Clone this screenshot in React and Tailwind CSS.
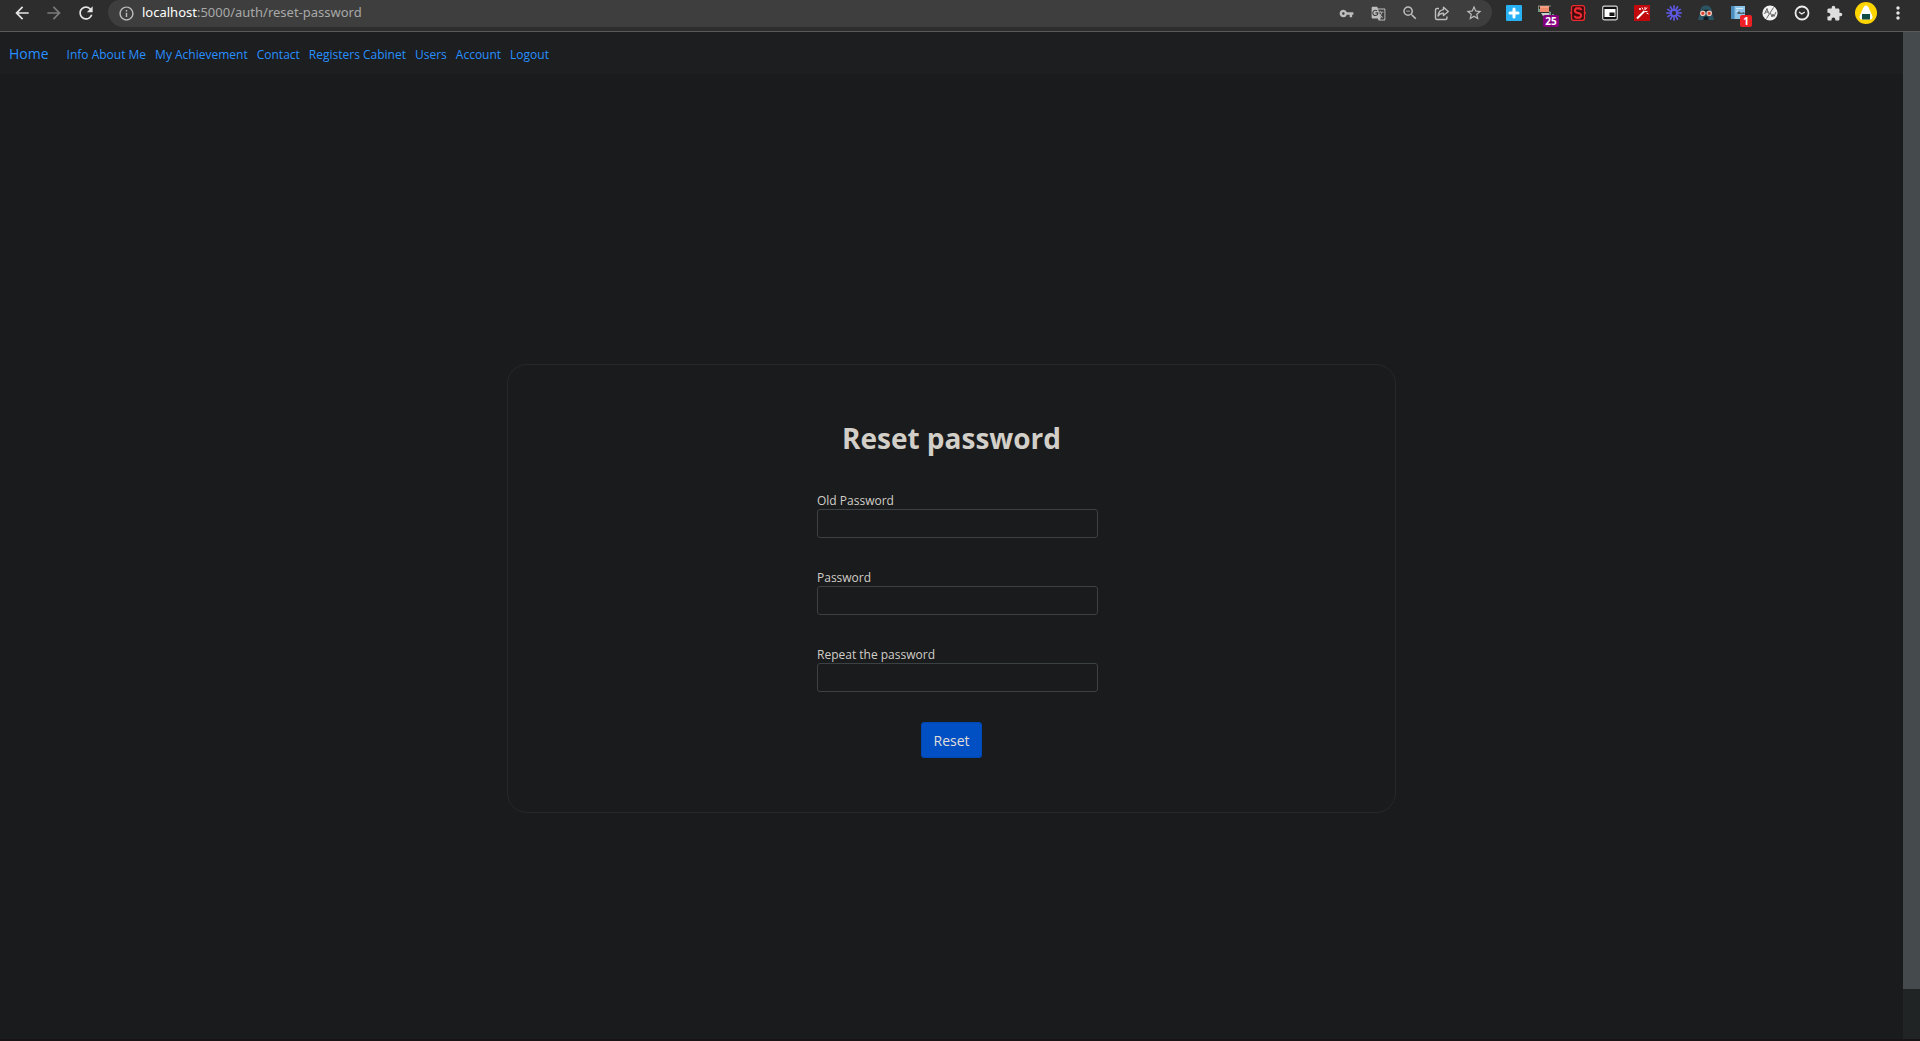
import React from "react";
import {
  MdArrowBack, MdArrowForward, MdRefresh, MdInfoOutline, MdVpnKey, MdGTranslate,
  MdZoomOut, MdStarBorder, MdExtension, MdMoreVert,
} from "react-icons/md";

const navLinks = ["Info About Me", "My Achievement", "Contact", "Registers Cabinet", "Users", "Account", "Logout"];

const fields = [
  { id: "old-password", label: "Old Password" },
  { id: "password", label: "Password" },
  { id: "repeat-password", label: "Repeat the password" },
];

function IconButton({ label, children }) {
  return (
    <button type="button" aria-label={label} className="flex h-[26px] w-8 shrink-0 items-center justify-center">
      {children}
    </button>
  );
}

function ShareIcon() {
  return (
    <svg viewBox="0 0 16 16" className="size-4" fill="none" stroke="currentColor" strokeWidth="1.4" strokeLinejoin="round">
      <path d="M5 3.5H3A1.5 1.5 0 0 0 1.5 5v8A1.500 1.500 0 0 0 3 14.500h8.500A1.500 1.500 0 0 0 13 13v-1.500" />
      <path d="M9.500 2.200 14.300 6.500 9.500 10.500V8.300C7 8.300 5.300 9 4 11c.3-3.500 2.300-6 5.500-6.400z" />
    </svg>
  );
}

function PlusIcon() {
  return (
    <svg viewBox="0 0 16 16" className="size-4">
      <rect width="16" height="16" rx="1" fill="#29b1f5" />
      <path d="M8 4v8M4 8h8" stroke="#fff" strokeWidth="3" strokeLinecap="round" />
    </svg>
  );
}

function SignIcon() {
  return (
    <svg viewBox="0 0 16 16" className="size-4">
      <path d="M.5 1v3M0 1h13" stroke="#8a8a7a" strokeWidth="1" />
      <rect x="2" y="1" width="9" height="6" fill="#f08a6c" />
      <path d="M2 2h9" stroke="#f7b39c" strokeWidth="1" />
      <path d="M0 4h2v3H0zM11 6l2 1v4h-2zM14 9h2v3h-2z" fill="#6f9b86" />
      <path d="M3 8h8v3H5z" fill="#c9cfcb" />
    </svg>
  );
}

function SIcon() {
  return (
    <svg viewBox="0 0 16 16" className="size-4">
      <rect x="1.500" y=".7" width="13" height="14.600" rx="2" fill="#3a0c0e" stroke="#ee2a2f" strokeWidth="1.300" />
      <path d="M0 8h1.500M14.500 8H16" stroke="#ee2a2f" strokeWidth="1.500" />
      <path d="M11 5.200V4.500L9.800 3.300H6.300L5 4.600v1.800l1.200 1.200 3.600.8L11 9.600v1.800l-1.300 1.300H6.200L5 11.500v-.8" fill="none" stroke="#ee2a2f" strokeWidth="2.200" />
    </svg>
  );
}

function PipIcon() {
  return (
    <svg viewBox="0 0 16 16" className="size-4">
      <rect x=".7" y="1.200" width="14.600" height="13.600" rx="1.500" fill="#111" stroke="#d6d6d6" strokeWidth="1.200" />
      <rect x="2.500" y="4" width="11" height="8" fill="#fff" />
      <rect x="7.500" y="7.500" width="5" height="3.500" fill="#111" />
    </svg>
  );
}

function WandIcon() {
  return (
    <svg viewBox="0 0 16 16" className="size-4">
      <rect width="16" height="16" fill="#c00a0d" />
      <path d="M3 13.500 10.500 6" stroke="#fff" strokeWidth="2" />
      <path d="M11 2v3M13.500 6.500H11M13 2.500 11.500 4.500M8 2.500l1 2M14.500 9l-2-1M5 4h2M6 3v2" stroke="#fff" strokeWidth="1" />
    </svg>
  );
}

function BurstIcon() {
  return (
    <svg viewBox="0 0 16 16" className="size-4" stroke="#6059e6" strokeWidth="1.600" fill="none">
      {[0, 30, 60, 90, 120, 150, 180, 210, 240, 270, 300, 330].map((a) => (
        <path key={a} d="M8 .2V5.500" transform={`rotate(${a} 8 8)`} />
      ))}
      <circle cx="8" cy="8" r="3" />
    </svg>
  );
}

function MaskIcon() {
  return (
    <svg viewBox="0 0 16 16" className="size-4">
      <path d="M2 8C2 3 4 .5 8 .5S14 3 14 8l2 7H0z" fill="#2b5464" />
      <path d="M4 5.500h8" stroke="#14242b" strokeWidth="1.500" />
      <circle cx="4.800" cy="8.300" r="2.200" fill="#d9402f" stroke="#f0c9bb" strokeWidth="1.200" />
      <circle cx="11.200" cy="8.300" r="2.200" fill="#d9402f" stroke="#f0c9bb" strokeWidth="1.200" />
      <path d="M5.500 12.500 8 11l2.500 1.500V15h-5z" fill="#101a20" />
    </svg>
  );
}

function NotebookIcon() {
  return (
    <svg viewBox="0 0 16 16" className="size-4">
      <rect x="1" y="1" width="14" height="13" fill="#8cc4ea" />
      <path d="M1 1h3.500v13H1z" fill="#4b8dbd" />
      <path d="M6 3.500h7M6 6h3" stroke="#d3ecfb" strokeWidth="1.200" />
      <path d="M7 8l2-2 2 2 3-1 1 2H8z" fill="#4c5f6b" />
    </svg>
  );
}

function SketchIcon() {
  return (
    <svg viewBox="0 0 16 16" className="size-4">
      <circle cx="8" cy="8" r="7.600" fill="#f1f1f1" />
      <path d="M2.500 9 5 3.500l1.500 5M3.500 7h3M11.500 2.500 4.500 13.500M8.500 8l1.500 4 1-3 1 2.500L14 7" fill="none" stroke="#555" strokeWidth=".9" />
    </svg>
  );
}

function ClockIcon() {
  return (
    <svg viewBox="0 0 16 16" className="size-4" fill="none" stroke="#ececec">
      <circle cx="8" cy="8" r="6.500" strokeWidth="1.800" />
      <path d="M5 7 7.800 9l3-2" strokeWidth="1.200" />
    </svg>
  );
}

function ProfileIcon() {
  return (
    <svg viewBox="0 0 22 22" className="size-[22px]">
      <circle cx="11" cy="11" r="11" fill="#ffd500" />
      <path d="M11 3.500c1 0 1.700.6 2.300 1.600l3.800 8.200c1 2.400.2 4.200-2 4.200H6.900c-2.200 0-3-1.800-2-4.200l3.800-8.200c.6-1 1.300-1.600 2.300-1.600z" fill="#fff" />
      <rect x="7" y="12" width="8" height="5.500" fill="#114b43" />
    </svg>
  );
}

function Badge({ className, children }) {
  return (
    <span className={`absolute flex h-3 items-center justify-center rounded-xs text-[10px] font-bold text-white ${className}`}>
      {children}
    </span>
  );
}

function BrowserBar() {
  return (
    <header className="flex h-8 shrink-0 items-start border-b border-[#5a5a5a] bg-[#2d2d2d]">
      <div className="flex w-[108px] shrink-0 pl-1.5 text-[#e6e6e6]">
        <IconButton label="Back"><MdArrowBack size={20} /></IconButton>
        <IconButton label="Forward"><MdArrowForward size={20} className="text-[#7b7b7b]" /></IconButton>
        <IconButton label="Reload"><MdRefresh size={20} /></IconButton>
      </div>
      <div className="flex h-[27px] min-w-0 grow items-start rounded-b-2xl rounded-t-xl bg-[#3e3e3e] pr-0.5 text-[#bdbdbd]">
        <div className="flex h-[26px] min-w-0 grow items-center gap-[7px] pl-[10px]">
          <MdInfoOutline size={17} className="shrink-0" />
          <div className="truncate font-['Noto_Sans',sans-serif] text-[13px] text-[#a8a8a8]">
            <span className="text-white">localhost</span>:5000/auth/reset-password
          </div>
        </div>
        <IconButton label="Passwords"><MdVpnKey size={15} /></IconButton>
        <IconButton label="Translate"><MdGTranslate size={15} /></IconButton>
        <IconButton label="Zoom"><MdZoomOut size={18} /></IconButton>
        <IconButton label="Share"><ShareIcon /></IconButton>
        <IconButton label="Bookmark"><MdStarBorder size={18} /></IconButton>
      </div>
      <div className="flex shrink-0 px-1.5">
        <IconButton label="Add"><PlusIcon /></IconButton>
        <div className="relative">
          <IconButton label="Signs"><SignIcon /></IconButton>
          <Badge className="top-[15px] left-[13px] w-4 bg-[#85007f]">25</Badge>
        </div>
        <IconButton label="Scripts"><SIcon /></IconButton>
        <IconButton label="Picture in picture"><PipIcon /></IconButton>
        <IconButton label="Wand"><WandIcon /></IconButton>
        <IconButton label="Burst"><BurstIcon /></IconButton>
        <IconButton label="Mask"><MaskIcon /></IconButton>
        <div className="relative">
          <IconButton label="Notebook"><NotebookIcon /></IconButton>
          <Badge className="top-[15px] left-[18px] w-3 bg-[#ee2026]">1</Badge>
        </div>
        <IconButton label="Sketch"><SketchIcon /></IconButton>
        <IconButton label="Clock"><ClockIcon /></IconButton>
        <IconButton label="Extensions"><MdExtension size={17} className="text-[#dedede]" /></IconButton>
        <IconButton label="Profile"><ProfileIcon /></IconButton>
        <IconButton label="Menu"><MdMoreVert size={20} className="text-[#e6e6e6]" /></IconButton>
      </div>
    </header>
  );
}

function NavBar() {
  return (
    <nav className="flex h-[42px] items-center bg-[#1c1e1f] pl-[9px] text-[#2890ff]">
      <div className="flex items-baseline gap-[18px]">
        <a href="#home" className="text-[14px]">Home</a>
        <div className="flex gap-[9px] text-[12px]">
          {navLinks.map((label) => (
            <a key={label} href={"#" + label.toLowerCase().replaceAll(" ", "-")}>{label}</a>
          ))}
        </div>
      </div>
    </nav>
  );
}

function ResetForm() {
  return (
    <form className="flex w-[889px] flex-col items-center rounded-[20px] border border-[#26292a] pt-[52px] pb-[54px]">
      <h1 className="text-[28px] leading-[42px] font-bold text-[#d2cec8]">Reset password</h1>
      <div className="mt-[34px] flex w-[269px] flex-col gap-8">
        {fields.map(({ id, label }) => (
          <div key={id} className="flex flex-col">
            <label htmlFor={id} className="text-[12px] leading-[16px] text-[#d2cec8]">{label}</label>
            <input id={id} type="password" className="h-[29px] w-[281px] rounded-[3px] border border-[#3c4143] bg-transparent px-2 text-[#d2cec8]" />
          </div>
        ))}
      </div>
      <button type="submit" className="mt-[30px] h-9 rounded-[3px] border border-[#0048b3] bg-[#0050c4] px-[11px] text-[14px] text-[#e2dfda]">
        Reset
      </button>
    </form>
  );
}

export default function App() {
  return (
    <div className="flex h-screen flex-col overflow-hidden bg-[#191b1c] font-['Open_Sans','Noto_Sans',sans-serif]">
      <BrowserBar />
      <div className="flex min-h-0 grow">
        <div className="flex min-w-0 grow flex-col">
          <NavBar />
          <main className="flex grow items-center justify-center pt-16">
            <ResetForm />
          </main>
        </div>
        <div className="w-[17px] shrink-0 bg-[#202425]">
          <div className="h-[95%] bg-[#454a4d]" />
        </div>
      </div>
      <div className="h-0.5 shrink-0 bg-[#181314]" />
    </div>
  );
}
